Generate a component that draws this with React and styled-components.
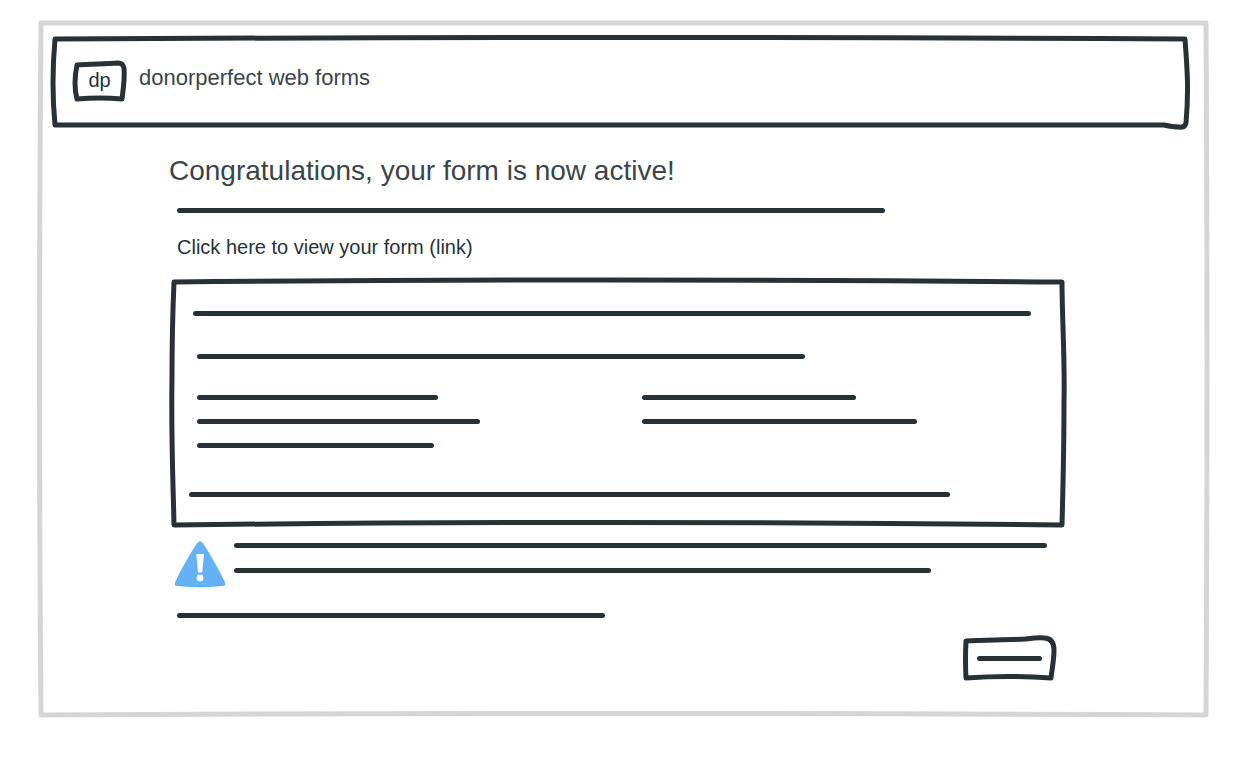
import React from "react";
import styled, { createGlobalStyle } from "styled-components";

const INK = "#263238";

const GlobalStyle = createGlobalStyle`
  *, *::before, *::after { box-sizing: border-box; }
  body {
    margin: 0;
    background: #fff;
    color: ${INK};
    font-family: "Liberation Sans", Arial, sans-serif;
  }
`;

const Outline = styled.svg`
  position: absolute;
  inset: 0;
  width: 100%;
  height: 100%;
  overflow: visible;
  pointer-events: none;

  path {
    fill: none;
    stroke: ${(p) => p.$color || INK};
    stroke-width: 5px;
    stroke-linejoin: round;
    stroke-linecap: round;
    vector-effect: non-scaling-stroke;
  }
`;

/* Hand-drawn border that stretches with the box it surrounds. */
function Sketch({ w, h, d, color }) {
  return (
    <Outline viewBox={`0 0 ${w} ${h}`} preserveAspectRatio="none" $color={color} aria-hidden="true">
      <path d={d} />
    </Outline>
  );
}

const Frame = styled.div`
  position: relative;
  margin: 20px 28px 40px 38px;
  padding: 16px 19px 37px 13px;
`;

const Header = styled.header`
  position: relative;
  display: flex;
  align-items: flex-start;
  gap: 12px;
  min-height: 94px;
  padding: 24px 21px;
`;

const Logo = styled.div`
  position: relative;
  flex: none;
  width: 55px;
  height: 43px;
  font-size: 20px;
  line-height: 40px;
  text-align: center;
`;

const Brand = styled.div`
  font-size: 22px;
  line-height: 36px;
  color: #3a454b;
`;

const Content = styled.main`
  display: flex;
  flex-direction: column;
  margin: 23px 123px 0 118px;
`;

const Title = styled.h1`
  margin: 0;
  font-size: 28px;
  line-height: 36px;
  font-weight: 400;
  color: #3a454b;
`;

const Intro = styled.div`
  display: flex;
  flex-direction: column;
  align-items: flex-start;
  gap: 22px;
  padding: 19px 0 18px 8px;
`;

const FormLink = styled.a`
  font-size: 20px;
  line-height: 24px;
  color: inherit;
  text-decoration: none;
`;

const Line = styled.div`
  width: ${(p) => p.$width}px;
  max-width: 100%;
  height: 5px;
  margin-left: ${(p) => p.$indent || 0}px;
  border-radius: 3px;
  background: ${INK};
`;

const Panel = styled.section`
  position: relative;
  display: flex;
  flex-direction: column;
  padding: 34px 20px 30px;
`;

const Columns = styled.div`
  display: grid;
  grid-template-columns: 445px 1fr;
  margin: 36px 0 44px 8px;
`;

const Column = styled.div`
  display: flex;
  flex-direction: column;
  gap: 19px;
`;

const Summary = styled.div`
  display: flex;
  flex-direction: column;
  gap: 38px;
`;

const Notice = styled.div`
  display: flex;
  gap: 9px;
  padding: 13px 0 0 6px;
`;

const NoticeLines = styled.div`
  display: flex;
  flex: 1;
  flex-direction: column;
  gap: 20px;
  padding-top: 3px;
`;

const WarningIcon = styled.svg`
  flex: none;
  width: 50px;
  height: 48px;
`;

const Footnote = styled.div`
  padding: 25px 0 17px 8px;
`;

const Actions = styled.div`
  display: flex;
  justify-content: flex-end;
  padding-right: 11px;
`;

const ActionButton = styled.button`
  position: relative;
  display: flex;
  align-items: center;
  justify-content: center;
  width: 93px;
  height: 46px;
  padding: 0;
  border: 0;
  background: transparent;
  cursor: pointer;
`;

export default function App() {
  return (
    <>
      <GlobalStyle />
      <Frame>
        <Sketch
          color="#d5d5d6"
          w={1171}
          h={698}
          d="M3 3 Q585 1 1168 3 Q1170 340 1168 695 Q585 692 3 695 Q0 350 3 3Z"
        />
        <Header>
          <Sketch
            w={1139}
            h={94}
            d="M4 3 Q570 0 1134 3 C1136 30 1138 54 1135 87 Q1134 92 1128 91 Q1122 91 1113 89 Q570 87 4 89 Q0 48 4 3Z"
          />
          <Logo>
            <Sketch
              w={55}
              h={43}
              d="M5 5 C18 4 32 4 46 3 Q51 3 52 8 C53 20 51 30 50 39 Q28 37 5 39 Q1 24 5 5Z"
            />
            dp
          </Logo>
          <Brand>donorperfect web forms</Brand>
        </Header>

        <Content>
          <Title>Congratulations, your form is now active!</Title>
          <Intro>
            <Line $width={708} />
            <FormLink href="#form">Click here to view your form (link)</FormLink>
          </Intro>

          <Panel>
            <Sketch
              w={898}
              h={249}
              d="M5 5 Q430 1 893 5 C893 40 896 80 895 125 C895 170 894 210 893 247 Q430 242 5 247 C4 200 2 160 3 100 Q3 50 5 5Z"
            />
            <Summary>
              <Line $width={838} $indent={4} />
              <Line $width={608} $indent={8} />
            </Summary>
            <Columns>
              <Column>
                <Line $width={241} />
                <Line $width={283} />
                <Line $width={237} />
              </Column>
              <Column>
                <Line $width={214} />
                <Line $width={275} />
              </Column>
            </Columns>
            <Line $width={761} />
          </Panel>

          <Notice>
            <WarningIcon viewBox="0 0 50 48" role="img" aria-label="Notice">
              <path
                d="M22.5 3 Q25 0 27.5 3 C34 13 43 28 50 43 Q51 45 49 45.500 Q25 48.500 1 45.500 Q-1 45 0 43 C7 28 16 13 22.500 3Z"
                fill="#64b1f5"
                stroke="#4b9fe8"
                strokeWidth="0.5"
              />
              <path d="M21.300 14 H29 L27.200 32.500 H23Z" fill="#fff" />
              <circle cx="25" cy="38" r="3.4" fill="#fff" />
            </WarningIcon>
            <NoticeLines>
              <Line $width={813} />
              <Line $width={697} />
            </NoticeLines>
          </Notice>

          <Footnote>
            <Line $width={428} />
          </Footnote>

          <Actions>
            <ActionButton type="button" aria-label="Continue">
              <Sketch
                w={93}
                h={46}
                d="M3 6 C22 5 44 5 62 4 C70 3 76 2 82 3 Q91 4 91 15 C91 25 89 34 88 43 Q45 40 3 43 Q2 25 3 6Z"
              />
              <Line $width={65} />
            </ActionButton>
          </Actions>
        </Content>
      </Frame>
    </>
  );
}
